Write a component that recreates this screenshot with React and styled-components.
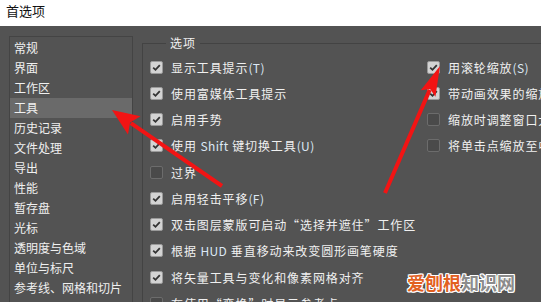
import React from 'react'
import styled, { createGlobalStyle } from 'styled-components'

const GlobalStyle = createGlobalStyle`
  html, body {
    margin: 0;
    padding: 0;
    background: #535353;
  }
  body {
    font-family: "Noto Sans CJK SC", "Noto Sans", sans-serif;
  }
`

const Window = styled.div`
  position: relative;
  width: 541px;
  height: 302px;
  overflow: hidden;
  display: flex;
  flex-direction: column;
  background: #535353;
`

const TitleBar = styled.div`
  height: 26px;
  flex: none;
  background: #ffffff;
  color: #111;
  font-size: 13px;
  line-height: 22px;
  padding-left: 6px;
`

const Body = styled.div`
  flex: 1;
  display: flex;
  padding: 10px 0 0 9px;
  gap: 9px;
  min-height: 0;
`

const Sidebar = styled.div`
  width: 122px;
  flex: none;
  border: 1px solid #444;
  border-bottom: none;
  padding-top: 1px;
  color: #f0f0f0;
  font-size: 12px;
`

const NavItem = styled.div`
  height: 20px;
  line-height: 20px;
  padding-left: 4px;
  white-space: nowrap;
  background: ${(p) => (p.$active ? '#6a6a6a' : 'transparent')};
`

const Group = styled.fieldset`
  flex: 1;
  margin: 0;
  padding: 4px 0 0 7px;
  border: none;
  border-top: 1px solid #434343;
  border-left: 1px solid #434343;
  min-width: 0;
`

const Legend = styled.legend`
  margin-left: 16px;
  padding: 0 4px;
  color: #f0f0f0;
  font-size: 12px;
  line-height: 14px;
  letter-spacing: 1px;
`

const Columns = styled.div`
  display: flex;
`

const Column = styled.div`
  width: ${(p) => p.$width || 'auto'};
  flex: ${(p) => (p.$width ? 'none' : '1')};
  display: flex;
  flex-direction: column;
  white-space: nowrap;
  overflow: hidden;
`

const Row = styled.div`
  height: 26.25px;
  display: flex;
  align-items: center;
  gap: 8px;
  color: #f0f0f0;
  font-size: 12px;
  letter-spacing: 0.9px;
`

const Box = styled.span`
  width: 13px;
  height: 13px;
  flex: none;
  box-sizing: border-box;
  border-radius: 2px;
  border: 1px solid ${(p) => (p.$checked ? '#9a9a9a' : '#6c6c6c')};
  background: ${(p) => (p.$checked ? '#d3d3d3' : '#4a4a4a')};
  display: flex;
  align-items: center;
  justify-content: center;
`

const Latin = styled.span`
  color: #dce8f4;
  letter-spacing: 0.4px;
`

const Overlay = styled.svg`
  position: absolute;
  left: 0;
  top: 0;
  pointer-events: none;
`

const Watermark = styled.div`
  position: absolute;
  left: 407px;
  top: 271px;
  font-size: 18px;
  font-weight: 700;
  line-height: 22px;
  color: #8c8c8c;
  text-shadow: -1px -1px 0 #fff, 1px -1px 0 #fff, -1px 1px 0 #fff, 1px 1px 0 #fff,
    0 1px 0 #fff, 0 -1px 0 #fff, 1px 0 0 #fff, -1px 0 0 #fff;
`

const Orange = styled.span`
  color: #e2601f;
`

const Check = ({ checked }) => (
  <Box $checked={checked}>
    {checked && (
      <svg width="9" height="9" viewBox="0 0 9 9">
        <polyline points="1.2,4.6 3.5,6.8 7.8,2.2" fill="none" stroke="#333" strokeWidth="1.8" />
      </svg>
    )}
  </Box>
)

const navItems = [
  '常规', '界面', '工作区', '工具', '历史记录', '文件处理', '导出', '性能',
  '暂存盘', '光标', '透明度与色域', '单位与标尺', '参考线、网格和切片', '增效工具',
]

const leftOptions = [
  { checked: true, label: <>显示工具提示<Latin>(T)</Latin></> },
  { checked: true, label: '使用富媒体工具提示' },
  { checked: true, label: '启用手势' },
  { checked: true, label: <>使用 <Latin>Shift</Latin> 键切换工具<Latin>(U)</Latin></> },
  { checked: false, label: '过界' },
  { checked: true, label: <>启用轻击平移<Latin>(F)</Latin></> },
  { checked: true, label: '双击图层蒙版可启动“选择并遮住”工作区' },
  { checked: true, label: <>根据 <Latin>HUD</Latin> 垂直移动来改变圆形画笔硬度</> },
  { checked: true, label: '将矢量工具与变化和像素网格对齐' },
  { checked: false, label: '在使用“变换”时显示参考点' },
]

const rightOptions = [
  { checked: true, label: <>用滚轮缩放<Latin>(S)</Latin></> },
  { checked: true, label: '带动画效果的缩放' },
  { checked: false, label: '缩放时调整窗口大小' },
  { checked: false, label: '将单击点缩放至中心' },
]

const Arrow = ({ tail, tip, head, half }) => {
  const dx = tip[0] - tail[0]
  const dy = tip[1] - tail[1]
  const len = Math.hypot(dx, dy)
  const ux = dx / len
  const uy = dy / len
  const bx = tip[0] - ux * head
  const by = tip[1] - uy * head
  const px = -uy
  const py = ux
  return (
    <g fill="#f21414" stroke="#f21414">
      <line x1={tail[0]} y1={tail[1]} x2={bx + ux * 4} y2={by + uy * 4} strokeWidth="4" />
      <polygon
        stroke="none"
        points={`${tip[0]},${tip[1]} ${bx + px * half},${by + py * half} ${bx + ux * 5},${by + uy * 5} ${bx - px * half},${by - py * half}`}
      />
    </g>
  )
}

export default function App() {
  return (
    <>
      <GlobalStyle />
      <Window>
        <TitleBar>首选项</TitleBar>
        <Body>
          <Sidebar>
            {navItems.map((n) => (
              <NavItem key={n} $active={n === '工具'}>{n}</NavItem>
            ))}
          </Sidebar>
          <Group>
            <Legend>选项</Legend>
            <Columns>
              <Column $width="277px">
                {leftOptions.map((o, i) => (
                  <Row key={i}>
                    <Check checked={o.checked} />
                    <span>{o.label}</span>
                  </Row>
                ))}
              </Column>
              <Column>
                {rightOptions.map((o, i) => (
                  <Row key={i}>
                    <Check checked={o.checked} />
                    <span>{o.label}</span>
                  </Row>
                ))}
              </Column>
            </Columns>
          </Group>
        </Body>
        <Overlay width="541" height="302" viewBox="0 0 541 302">
          <Arrow tail={[222, 186]} tip={[112, 110]} head={27} half={11} />
          <Arrow tail={[385, 193]} tip={[440, 66]} head={30} half={8} />
        </Overlay>
        <Watermark>
          <Orange>爱刨根</Orange>知识网
        </Watermark>
      </Window>
    </>
  )
}
